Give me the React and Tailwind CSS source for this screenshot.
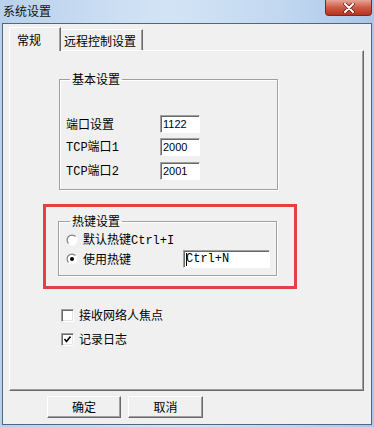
import React from 'react'

const mono = "font-['Liberation_Mono','Noto_Sans_CJK_SC',monospace] text-[12px]"

function Field({ className, children }) {
  return (
    <div className={`h-[18px] bg-white border border-[#a0a0a0] border-r-white border-b-white shadow-[inset_1px_1px_0_#696969] flex items-center pl-[2px] font-['Liberation_Sans',sans-serif] text-[11px] leading-none ${className}`}>
      {children}
    </div>
  )
}

function Group({ title, className, children }) {
  return (
    <fieldset className={`border border-[#a0a0a0] shadow-[inset_1px_1px_0_#fff,1px_1px_0_#fff] ${className}`}>
      <legend className="ml-[4px] px-[2px] h-[14px] leading-[14px] text-[12px]">{title}</legend>
      {children}
    </fieldset>
  )
}

function Radio({ checked }) {
  return (
    <svg width="12" height="12" viewBox="0 0 12 12" className="shrink-0">
      <defs>
        <linearGradient id="rg" x1="0" y1="0" x2="1" y2="1">
          <stop offset="0.45" stopColor="#808080" />
          <stop offset="0.55" stopColor="#ffffff" />
        </linearGradient>
      </defs>
      <circle cx="6" cy="6" r="5.5" fill="url(#rg)" />
      <circle cx="6" cy="6" r="4.3" fill="#fff" />
      {checked && <circle cx="6" cy="6" r="2" fill="#000" />}
    </svg>
  )
}

function Check({ checked, label }) {
  return (
    <div className="flex items-center h-[16px] gap-[5px]">
      <div className="w-[13px] h-[13px] bg-white border border-[#a0a0a0] border-r-white border-b-white shadow-[inset_1px_1px_0_#696969,inset_-1px_-1px_0_#e3e3e3] flex items-center justify-center">
        {checked && (
          <svg width="9" height="9" viewBox="0 0 9 9">
            <path d="M1.5 4 L3.5 6.5 L7.5 1.5" stroke="#000" strokeWidth="1.6" fill="none" />
          </svg>
        )}
      </div>
      <span className="text-[12px] leading-none">{label}</span>
    </div>
  )
}

function Btn({ className, children }) {
  return (
    <button className={`h-[22px] bg-[#f0f0f0] border border-white border-r-[#696969] border-b-[#696969] shadow-[inset_-1px_-1px_0_#a0a0a0] text-[12px] leading-none ${className}`}>
      {children}
    </button>
  )
}

export default function App() {
  return (
    <div className="w-[374px] h-[427px] flex flex-col bg-[linear-gradient(90deg,#b9d1ec,#d3e4f6_45%,#c2d8f0_75%,#aac6e8)] text-black font-['Noto_Sans_CJK_SC',sans-serif] overflow-hidden">
      {/* title bar */}
      <div className="h-[23px] flex items-start justify-between">
        <span className="ml-[3px] mt-[3px] text-[12px] leading-[15px] text-[#111]">系统设置</span>
        <div className="mr-[2px] w-[47px] h-[16px] rounded-b-[4px] border border-t-0 border-[#7a2a20] bg-[linear-gradient(180deg,#e8a496,#cf5a45_50%,#b8321e)] flex items-center justify-center">
          <svg width="14" height="10" viewBox="0 0 14 10">
            <path d="M3 1 L11 9 M11 1 L3 9" stroke="#5a1a10" strokeWidth="3.4" strokeLinecap="round" />
            <path d="M3 1 L11 9 M11 1 L3 9" stroke="#fff" strokeWidth="2" strokeLinecap="round" />
          </svg>
        </div>
      </div>

      {/* window body */}
      <div className="mx-[2px] h-[402px] bg-[#f0f0f0] border border-[#55657c] pt-[3px] pl-[6px]">
        {/* tabs */}
        <div className="flex items-end h-[23px] relative z-10 text-[12px]">
          <div className="h-[24px] -mb-px w-[52px] bg-[#f0f0f0] border-l border-t border-white border-r border-r-[#696969] shadow-[inset_-1px_0_0_#a0a0a0] pl-[7px] pt-[5px] leading-[14px]">
            常规
          </div>
          <div className="h-[21px] w-[82px] border-t border-white border-r border-r-[#696969] shadow-[inset_-1px_0_0_#a0a0a0] pl-[3px] pt-[4px] leading-[14px]">
            远程控制设置
          </div>
        </div>

        {/* panel */}
        <div className="w-[355px] h-[341px] border border-white border-r-[#696969] border-b-[#696969] shadow-[inset_-1px_-1px_0_#a0a0a0] flex flex-col items-start">
          <Group title="基本设置" className="ml-[49px] mt-[21px] w-[219px] pt-[29px] pb-[8px] pl-[6px]">
            <div className="flex flex-col gap-[4px]">
              <div className="flex items-center">
                <span className="w-[94px] text-[12px]">端口设置</span>
                <Field className="w-[40px]">1122</Field>
              </div>
              <div className="flex items-center">
                <span className="w-[94px] text-[12px]"><span className={mono}>TCP</span>端口<span className={mono}>1</span></span>
                <Field className="w-[40px]">2000</Field>
              </div>
              <div className="flex items-center">
                <span className="w-[94px] text-[12px]"><span className={mono}>TCP</span>端口<span className={mono}>2</span></span>
                <Field className="w-[40px]">2001</Field>
              </div>
            </div>
          </Group>

          <div className="ml-[33px] mt-[14px] w-[254px] h-[85px] border-[3px] border-[#e5403f]">
            <Group title="热键设置" className="ml-[12px] mt-[7px] w-[219px] pt-[5px] pb-[7px] pl-[7px]">
              <div className="flex items-center h-[14px] gap-[5px]">
                <Radio />
                <span className="text-[12px]">默认热键<span className={mono}>Ctrl+I</span></span>
              </div>
              <div className="flex items-center h-[18px] mt-[3px]">
                <Radio checked />
                <span className="ml-[5px] w-[100px] text-[12px]">使用热键</span>
                <Field className="w-[87px] relative">
                  <span className="absolute left-[2px] top-[2px] w-px h-[13px] bg-black" />
                  <span className={mono}>Ctrl+N</span>
                </Field>
              </div>
            </Group>
          </div>

          <div className="ml-[51px] mt-[18px] flex flex-col gap-[8px]">
            <Check label="接收网络人焦点" />
            <Check checked label="记录日志" />
          </div>
        </div>

        {/* buttons */}
        <div className="flex mt-[5px] ml-[38px] gap-[7px]">
          <Btn className="w-[74px]">确定</Btn>
          <Btn className="w-[75px]">取消</Btn>
        </div>
      </div>
    </div>
  )
}
